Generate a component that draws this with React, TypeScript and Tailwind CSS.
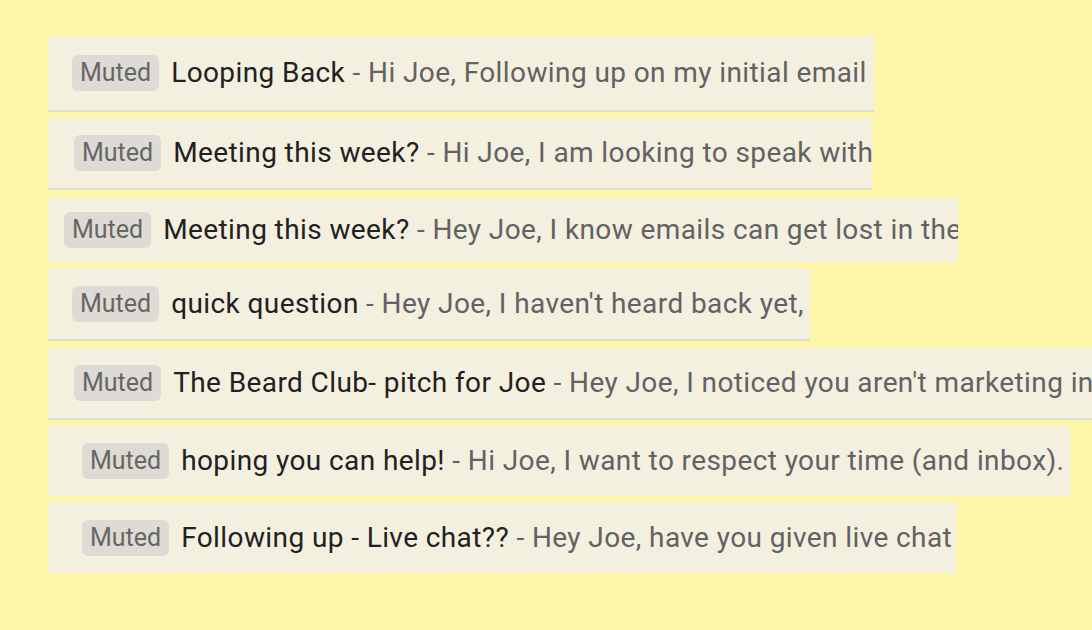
type Row = {
  subject: string;
  snippet: string;
  rowClass: string;
};

const rows: Row[] = [
  {
    subject: "Looping Back",
    snippet: "Hi Joe, Following up on my initial email",
    rowClass: "mt-[36px] h-[76px] w-[826px] pl-[24px] border-b-2",
  },
  {
    subject: "Meeting this week?",
    snippet: "Hi Joe, I am looking to speak with",
    rowClass: "mt-[6px] h-[72px] w-[824px] pl-[26px] border-b-2",
  },
  {
    subject: "Meeting this week?",
    snippet: "Hey Joe, I know emails can get lost in the",
    rowClass: "mt-[8px] h-[64px] w-[910px] pl-[16px]",
  },
  {
    subject: "quick question",
    snippet: "Hey Joe, I haven't heard back yet,",
    rowClass: "mt-[6px] h-[73px] w-[762px] pl-[24px] border-b-2",
  },
  {
    subject: "The Beard Club- pitch for Joe",
    snippet: "Hey Joe, I noticed you aren't marketing in",
    rowClass: "mt-[7px] h-[72px] w-[1100px] pl-[26px] border-b-2",
  },
  {
    subject: "hoping you can help!",
    snippet: "Hi Joe, I want to respect your time (and inbox).",
    rowClass: "mt-[6px] h-[70px] w-[1022px] pl-[34px]",
  },
  {
    subject: "Following up - Live chat??",
    snippet: "Hey Joe, have you given live chat",
    rowClass: "mt-[6px] h-[71px] w-[908px] pl-[34px]",
  },
];

const EmailRow = ({ subject, snippet, rowClass }: Row) => {
  return (
    <div
      className={`flex items-center overflow-hidden whitespace-nowrap bg-[#f3f0e0] border-[#e0ddcf] ${rowClass}`}
    >
      <span className="flex h-9 shrink-0 items-center rounded-md bg-[#dddbd3] px-[8px] text-[25px] text-[#666666]">
        Muted
      </span>
      <span className="ml-[12px] shrink-0 text-[28px] tracking-[0.4px] text-[#212121]">
        {subject}
      </span>
      <span className="text-[28px] tracking-[0.4px] text-[#626262]">&nbsp;- {snippet}</span>
    </div>
  );
};

export default function App() {
  return (
    <div
      className="h-screen w-screen overflow-hidden bg-[#fdf5a8] pl-[48px]"
      style={{ fontFamily: "Roboto, 'Noto Sans', sans-serif" }}
    >
      <div className="flex flex-col">
        {rows.map((row, i) => (
          <EmailRow key={i} {...row} />
        ))}
      </div>
    </div>
  );
}
